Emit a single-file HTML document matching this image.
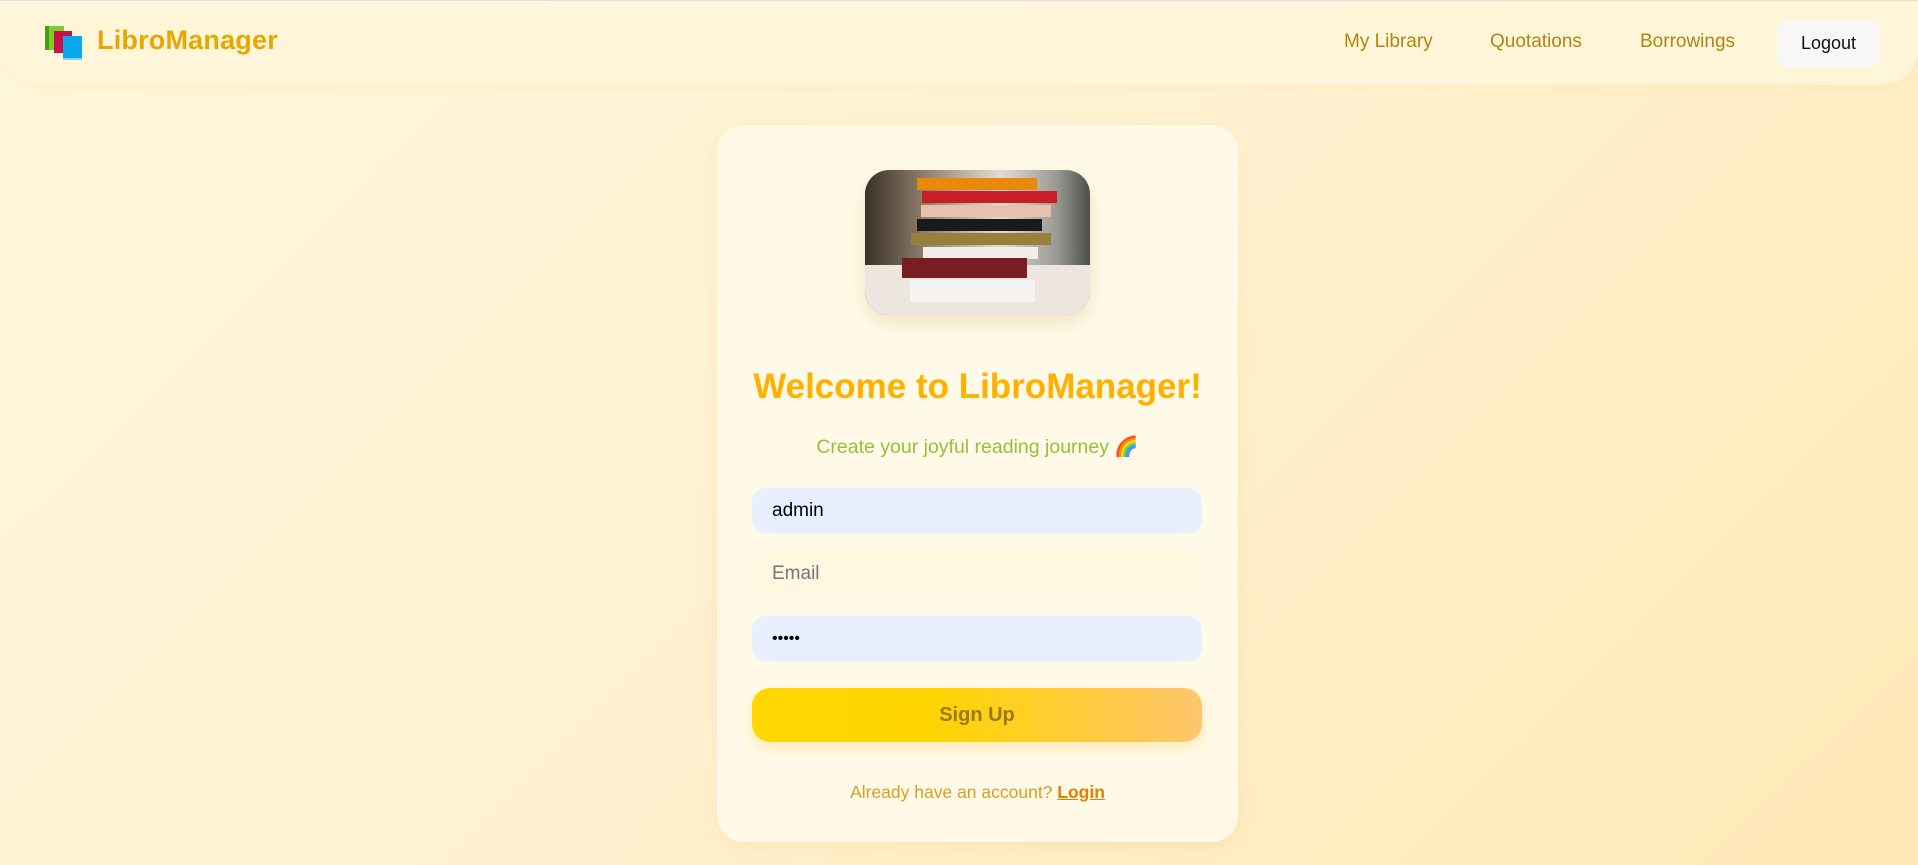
<!DOCTYPE html>
<html><head><meta charset="utf-8"><style>
*{box-sizing:border-box;margin:0;padding:0}
html,body{width:1918px;height:865px;overflow:hidden}
body{font-family:"Liberation Sans",sans-serif;background:linear-gradient(135deg,#fff7db 0%,#fff1d0 50%,#ffe8b6 100%);position:relative;border-top:1px solid #dfe3e8}
.nav{position:absolute;left:0;top:1px;width:1918px;height:83px;background:#fff5d9;border-radius:0 0 36px 36px;box-shadow:0 2px 8px rgba(240,200,100,.15)}
.brand{position:absolute;left:97px;top:23px;font-size:27px;font-weight:bold;color:#e6a800;letter-spacing:.2px}
.logo{position:absolute;left:45px;top:24px;width:38px;height:36px}
.nl{position:absolute;top:29px;font-size:19px;color:#b0850f}
.logout{position:absolute;left:1778px;top:19px;width:101px;height:46px;background:#f7f7f7;border-radius:8px;font-size:18px;color:#111;text-align:center;line-height:44px}
.card{position:absolute;left:717px;top:124px;width:521px;height:717px;background:#fffae8;border-radius:26px;box-shadow:0 4px 16px rgba(240,200,110,.25)}
.img{position:absolute;left:148px;top:45px;width:225px;height:145px;border-radius:24px;overflow:hidden;background:linear-gradient(90deg,#3a3128 0%,#8a7a68 25%,#e4dcd2 60%,#9a9a95 85%,#4b5048 100%);box-shadow:0 8px 18px rgba(200,160,80,.25)}
.b{position:absolute;height:12px}
h1{position:absolute;left:0;width:521px;top:242px;text-align:center;font-size:35px;color:#ffb000;font-weight:bold}
.sub{position:absolute;left:0;width:521px;top:310px;text-align:center;font-size:19.5px;color:#96c03a}
.in{position:absolute;left:35px;width:450px;height:46px;border-radius:14px;font-size:19px;padding-left:20px;line-height:46px}
.btn{position:absolute;left:35px;top:563px;width:450px;height:54px;border-radius:18px;background:linear-gradient(90deg,#ffd700 0%,#ffd400 40%,#ffc56e 100%);text-align:center;line-height:54px;font-size:20px;font-weight:bold;color:#9a7a10;box-shadow:0 6px 14px rgba(255,200,60,.3)}
.al{position:absolute;left:0;width:521px;top:657px;text-align:center;font-size:17.5px;color:#d4a020}
.al b{color:#e67e00;text-decoration:underline}
</style></head><body>
<div class="nav">
<svg class="logo" viewBox="0 0 38 36"><rect x="0" y="0" width="19" height="24" fill="#7ccf2a"/><rect x="0" y="0" width="4" height="24" fill="#4e9a1a"/><rect x="9" y="5" width="18" height="22" fill="#c8104a"/><rect x="18" y="10" width="19" height="24" fill="#08a8ee"/><rect x="18" y="32" width="19" height="2" fill="#8fcff0"/></svg>
<div class="brand">LibroManager</div>
<div class="nl" style="left:1344px">My Library</div>
<div class="nl" style="left:1490px">Quotations</div>
<div class="nl" style="left:1640px">Borrowings</div>
<div class="logout">Logout</div>
</div>
<div class="card">
<div class="img">
<div style="position:absolute;left:0;top:95px;width:225px;height:50px;background:#ece6df"></div>
<div class="b" style="left:52px;top:8px;width:120px;background:#e8890c"></div>
<div class="b" style="left:57px;top:21px;width:135px;background:#c81e28"></div>
<div class="b" style="left:56px;top:35px;width:130px;background:#e6c2ae"></div>
<div class="b" style="left:52px;top:49px;width:125px;background:#1a1a1a"></div>
<div class="b" style="left:46px;top:63px;width:140px;background:#9a7e3c"></div>
<div class="b" style="left:58px;top:77px;width:115px;background:#f2eee8"></div>
<div class="b" style="left:37px;top:88px;width:125px;height:20px;background:#7a1c24"></div>
<div class="b" style="left:45px;top:110px;width:125px;height:22px;background:#f6f4f2"></div>
</div>
<h1>Welcome to LibroManager!</h1>
<div class="sub">Create your joyful reading journey 🌈</div>
<div class="in" style="top:363px;background:#e8f0fe;color:#000">admin</div>
<div class="in" style="top:426px;background:#fff7e0;color:#757575">Email</div>
<div class="in" style="top:491px;background:#e8f0fe;color:#000;font-size:16px">•••••</div>
<div class="btn">Sign Up</div>
<div class="al">Already have an account? <b>Login</b></div>
</div>
</body></html>
